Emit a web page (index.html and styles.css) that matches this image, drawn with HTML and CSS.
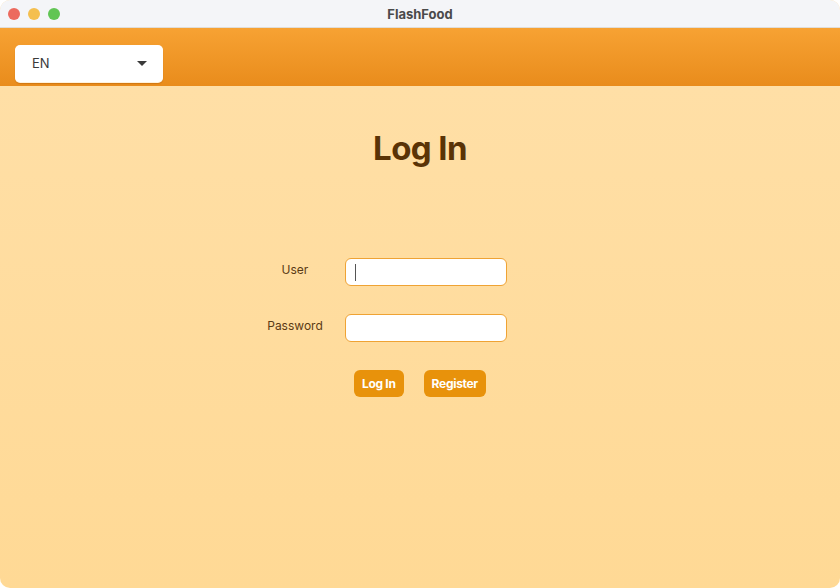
FILE: index.html
```html
<!DOCTYPE html>
<html>

<head>
    <meta charset="UTF-8">
    <title>FlashFood</title>
    <link rel="stylesheet" href="styles.css">
</head>

<body>
    <div class="window">
        <div class="titlebar">
            <div class="lights">
                <span class="light red"></span>
                <span class="light yellow"></span>
                <span class="light green"></span>
            </div>
            <div class="title">FlashFood</div>
        </div>
        <div class="topbar">
            <div class="lang">
                <span>EN</span>
                <span class="caret"></span>
            </div>
        </div>
        <div class="content">
            <h1>Log In</h1>
            <div class="form">
                <div class="row">
                    <label>User</label>
                    <div class="input"><span class="cursor"></span></div>
                </div>
                <div class="row">
                    <label>Password</label>
                    <div class="input"></div>
                </div>
                <div class="buttons">
                    <button class="btn">Log In</button>
                    <button class="btn">Register</button>
                </div>
            </div>
        </div>
    </div>
</body>

</html>
```

FILE: styles.css
```css
* {
    padding: 0;
    margin: 0;
    box-sizing: border-box;
}

body {
    background: #ffffff;
    font-family: Inter, "Noto Sans", sans-serif;
    width: 840px;
    height: 588px;
}

.window {
    width: 840px;
    height: 588px;
    border-radius: 10px;
    overflow: hidden;
    display: flex;
    flex-direction: column;
    background: linear-gradient(#ffe0a9, #ffd995);
}

.titlebar {
    height: 28px;
    background: #f4f5f8;
    border-bottom: 1px solid #e0ddd8;
    display: flex;
    align-items: center;
    justify-content: center;
    position: relative;
}

.lights {
    position: absolute;
    left: 8px;
    top: 8px;
    display: flex;
    gap: 8px;
}

.light {
    width: 12px;
    height: 12px;
    border-radius: 50%;
}

.red {
    background: #ec6a5e;
}

.yellow {
    background: #f4bf4f;
}

.green {
    background: #61c554;
}

.title {
    font-size: 13px;
    font-weight: 700;
    color: #4a4a4a;
}

.topbar {
    height: 58px;
    background: linear-gradient(#f7a233, #e98c1c);
    padding: 17px 0 0 15px;
}

.lang {
    width: 148px;
    height: 37px;
    background: #ffffff;
    border-radius: 5px;
    box-shadow: 0 1px 0 #fff2dc, 0 2px 1px rgba(160, 80, 0, 0.35);
    display: flex;
    align-items: center;
    justify-content: space-between;
    padding: 0 16px 1px 17px;
    font-size: 13px;
    color: #3a3a3a;
}

.caret {
    width: 0;
    height: 0;
    border-left: 5px solid transparent;
    border-right: 5px solid transparent;
    border-top: 5px solid #3a3a3a;
}

.content {
    flex: 1;
    display: flex;
    flex-direction: column;
    align-items: center;
}

h1 {
    margin-top: 42px;
    font-size: 33px;
    font-weight: 700;
    letter-spacing: -0.6px;
    color: #5a3306;
}

.form {
    margin-top: 90px;
    margin-right: 76px;
    display: flex;
    flex-direction: column;
    gap: 28px;
}

.row {
    display: flex;
    align-items: center;
    gap: 12px;
}

.row label {
    width: 76px;
    text-align: center;
    font-size: 12px;
    color: #5a3a14;
    margin-bottom: 5px;
}

.input {
    width: 162px;
    height: 28px;
    background: #ffffff;
    border: 1px solid #efa334;
    border-radius: 6px;
    padding: 5px 0 0 9px;
}

.cursor {
    display: block;
    width: 1px;
    height: 17px;
    background: #555555;
}

.buttons {
    display: flex;
    gap: 20px;
    padding-left: 97px;
}

.btn {
    height: 27px;
    padding: 0 8px;
    border: none;
    border-radius: 6px;
    background: #e8920b;
    color: #ffffff;
    font-family: Inter, "Noto Sans", sans-serif;
    font-size: 12px;
    font-weight: 700;
    letter-spacing: -0.3px;
}
```
